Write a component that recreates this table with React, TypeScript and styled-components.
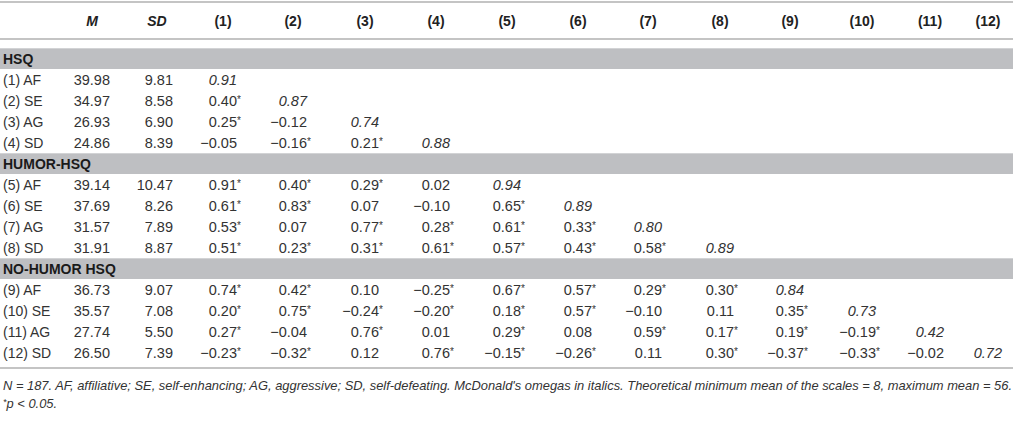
import React from 'react'
import styled, { createGlobalStyle } from 'styled-components'

const GlobalStyle = createGlobalStyle`
  body {
    margin: 0;
    background: #fff;
    font-family: "Liberation Sans", Arial, sans-serif;
    color: #333;
  }
`

const COLS = '60px 56px 63px 64px 70px 72px 71px 71px 71px 70px 72px 70px 72px 68px 58px'

const Table = styled.div`
  width: 1013px;
  margin-top: 1px;
  border-top: 2px solid #c4c4c4;
  font-size: 14px;
`

const HeadRow = styled.div`
  display: grid;
  grid-template-columns: ${COLS};
  height: 35px;
  align-items: center;
  border-bottom: 2px solid #c4c4c4;
  margin-bottom: 8px;
`

const HeadCell = styled.div`
  text-align: right;
  padding-right: 6px;
  font-weight: bold;
  color: #222;
`

const HeadLabel = styled.span<{ $w: number; $italic?: boolean }>`
  display: inline-block;
  width: ${(p) => p.$w}px;
  text-align: center;
  font-style: ${(p) => (p.$italic ? 'italic' : 'normal')};
`

const Band = styled.div`
  height: 20px;
  line-height: 20px;
  background: #bebfc2;
  border-top: 1px solid #d2d3d5;
  padding-left: 3px;
  font-weight: bold;
  color: #1a1a1a;
`

const Row = styled.div`
  display: grid;
  grid-template-columns: ${COLS};
  height: 21px;
  align-items: center;
`

const Label = styled.div`
  padding-left: 3px;
  white-space: nowrap;
`

const Cell = styled.div<{ $italic?: boolean }>`
  text-align: right;
  white-space: nowrap;
  font-size: 14.5px;
  font-style: ${(p) => (p.$italic ? 'italic' : 'normal')};
`

const Star = styled.span`
  display: inline-block;
  width: 6px;
  text-align: left;
  font-size: 10px;
  vertical-align: 3px;
`

const Bottom = styled.div`
  border-top: 2px solid #c4c4c4;
  margin-top: 4px;
  padding: 8px 0 0 3px;
  font-size: 12.9px;
  font-style: italic;
  line-height: 17px;
  white-space: nowrap;
`

const Sup = styled.span`
  font-size: 9px;
  vertical-align: 3px;
`

type Section = { title: string; rows: string[][] }

const sections: Section[] = [
  {
    title: 'HSQ',
    rows: [
      ['(1) AF', '39.98', '9.81', '0.91'],
      ['(2) SE', '34.97', '8.58', '0.40*', '0.87'],
      ['(3) AG', '26.93', '6.90', '0.25*', '−0.12', '0.74'],
      ['(4) SD', '24.86', '8.39', '−0.05', '−0.16*', '0.21*', '0.88'],
    ],
  },
  {
    title: 'HUMOR-HSQ',
    rows: [
      ['(5) AF', '39.14', '10.47', '0.91*', '0.40*', '0.29*', '0.02', '0.94'],
      ['(6) SE', '37.69', '8.26', '0.61*', '0.83*', '0.07', '−0.10', '0.65*', '0.89'],
      ['(7) AG', '31.57', '7.89', '0.53*', '0.07', '0.77*', '0.28*', '0.61*', '0.33*', '0.80'],
      ['(8) SD', '31.91', '8.87', '0.51*', '0.23*', '0.31*', '0.61*', '0.57*', '0.43*', '0.58*', '0.89'],
    ],
  },
  {
    title: 'NO-HUMOR HSQ',
    rows: [
      ['(9) AF', '36.73', '9.07', '0.74*', '0.42*', '0.10', '−0.25*', '0.67*', '0.57*', '0.29*', '0.30*', '0.84'],
      ['(10) SE', '35.57', '7.08', '0.20*', '0.75*', '−0.24*', '−0.20*', '0.18*', '0.57*', '−0.10', '0.11', '0.35*', '0.73'],
      ['(11) AG', '27.74', '5.50', '0.27*', '−0.04', '0.76*', '0.01', '0.29*', '0.08', '0.59*', '0.17*', '0.19*', '−0.19*', '0.42'],
      ['(12) SD', '26.50', '7.39', '−0.23*', '−0.32*', '0.12', '0.76*', '−0.15*', '−0.26*', '0.11', '0.30*', '−0.37*', '−0.33*', '−0.02', '0.72'],
    ],
  },
]

const numbered = Array.from({ length: 12 }, (_, i) => `(${i + 1})`)

const App: React.FC = () => {
  return (
    <>
      <GlobalStyle />
      <Table>
        <HeadRow>
          <div />
          <HeadCell>
            <HeadLabel $w={36} $italic>M</HeadLabel>
          </HeadCell>
          <HeadCell>
            <HeadLabel $w={32} $italic>SD</HeadLabel>
          </HeadCell>
          {numbered.map((n) => (
            <HeadCell key={n}>
              <HeadLabel $w={28}>{n}</HeadLabel>
            </HeadCell>
          ))}
        </HeadRow>
        {sections.map((section) => (
          <div key={section.title}>
            <Band>{section.title}</Band>
            {section.rows.map((row) => {
              const [label, ...values] = row
              return (
                <Row key={label}>
                  <Label>{label}</Label>
                  {values.map((v, i) => {
                    const star = v.endsWith('*')
                    const num = star ? v.slice(0, -1) : v
                    // last value in each row is the omega on the diagonal
                    const italic = i >= 2 && i === values.length - 1
                    return (
                      <Cell key={i} $italic={italic}>
                        {num}
                        <Star>{star ? '*' : ''}</Star>
                      </Cell>
                    )
                  })}
                </Row>
              )
            })}
          </div>
        ))}
        <Bottom>
          N = 187. AF, affiliative; SE, self-enhancing; AG, aggressive; SD, self-defeating. McDonald's omegas in
          italics. Theoretical minimum mean of the scales = 8, maximum mean = 56.
          <br />
          <Sup>*</Sup>p &lt; 0.05.
        </Bottom>
      </Table>
    </>
  )
}

export default App
